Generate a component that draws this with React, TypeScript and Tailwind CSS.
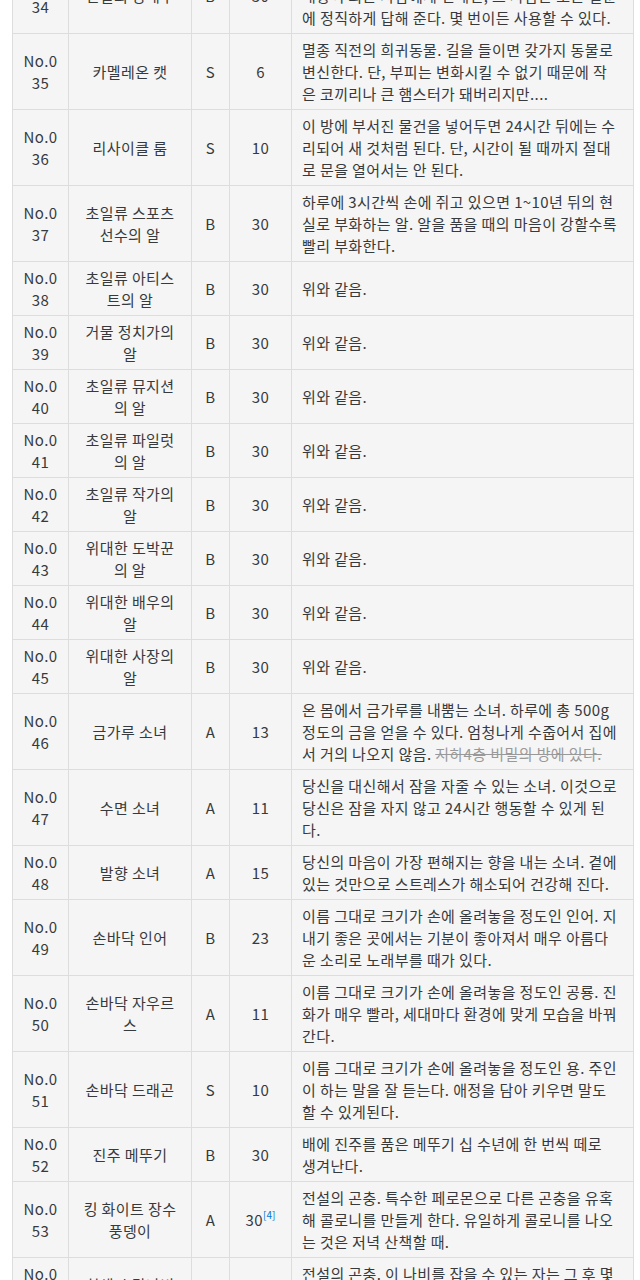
import React from "react";

interface Item {
  no: string;
  name: string;
  grade: string;
  price: string;
  note?: string;
  desc: string[];
  struck?: string;
}

// Lines are split with "|" to follow the wiki table's own wrapping.
const SAME = ["위와 같음."];

const ITEMS: Item[] = [
  {
    no: "034",
    name: "진실의 양배추",
    grade: "B",
    price: "30",
    desc: [
      "이 양배추를 먹게 하고 싶은 사람을 정한 뒤,",
      "대상이 되는 사람에게 건네면, 그 사람은 모든 질문",
      "에 정직하게 답해 준다. 몇 번이든 사용할 수 있다.",
    ],
  },
  {
    no: "035",
    name: "카멜레온 캣",
    grade: "S",
    price: "6",
    desc: [
      "멸종 직전의 희귀동물. 길을 들이면 갖가지 동물로",
      "변신한다. 단, 부피는 변화시킬 수 없기 때문에 작",
      "은 코끼리나 큰 햄스터가 돼버리지만....",
    ],
  },
  {
    no: "036",
    name: "리사이클 룸",
    grade: "S",
    price: "10",
    desc: [
      "이 방에 부서진 물건을 넣어두면 24시간 뒤에는 수",
      "리되어 새 것처럼 된다. 단, 시간이 될 때까지 절대",
      "로 문을 열어서는 안 된다.",
    ],
  },
  {
    no: "037",
    name: "초일류 스포츠|선수의 알",
    grade: "B",
    price: "30",
    desc: [
      "하루에 3시간씩 손에 쥐고 있으면 1~10년 뒤의 현",
      "실로 부화하는 알. 알을 품을 때의 마음이 강할수록",
      "빨리 부화한다.",
    ],
  },
  { no: "038", name: "초일류 아티스|트의 알", grade: "B", price: "30", desc: SAME },
  { no: "039", name: "거물 정치가의|알", grade: "B", price: "30", desc: SAME },
  { no: "040", name: "초일류 뮤지션|의 알", grade: "B", price: "30", desc: SAME },
  { no: "041", name: "초일류 파일럿|의 알", grade: "B", price: "30", desc: SAME },
  { no: "042", name: "초일류 작가의|알", grade: "B", price: "30", desc: SAME },
  { no: "043", name: "위대한 도박꾼|의 알", grade: "B", price: "30", desc: SAME },
  { no: "044", name: "위대한 배우의|알", grade: "B", price: "30", desc: SAME },
  { no: "045", name: "위대한 사장의|알", grade: "B", price: "30", desc: SAME },
  {
    no: "046",
    name: "금가루 소녀",
    grade: "A",
    price: "13",
    desc: [
      "온 몸에서 금가루를 내뿜는 소녀. 하루에 총 500g",
      "정도의 금을 얻을 수 있다. 엄청나게 수줍어서 집에",
      "서 거의 나오지 않음. ",
    ],
    struck: "지하4층 비밀의 방에 있다.",
  },
  {
    no: "047",
    name: "수면 소녀",
    grade: "A",
    price: "11",
    desc: [
      "당신을 대신해서 잠을 자줄 수 있는 소녀. 이것으로",
      "당신은 잠을 자지 않고 24시간 행동할 수 있게 된",
      "다.",
    ],
  },
  {
    no: "048",
    name: "발향 소녀",
    grade: "A",
    price: "15",
    desc: [
      "당신의 마음이 가장 편해지는 향을 내는 소녀. 곁에",
      "있는 것만으로 스트레스가 해소되어 건강해 진다.",
    ],
  },
  {
    no: "049",
    name: "손바닥 인어",
    grade: "B",
    price: "23",
    desc: [
      "이름 그대로 크기가 손에 올려놓을 정도인 인어. 지",
      "내기 좋은 곳에서는 기분이 좋아져서 매우 아름다",
      "운 소리로 노래부를 때가 있다.",
    ],
  },
  {
    no: "050",
    name: "손바닥 자우르|스",
    grade: "A",
    price: "11",
    desc: [
      "이름 그대로 크기가 손에 올려놓을 정도인 공룡. 진",
      "화가 매우 빨라, 세대마다 환경에 맞게 모습을 바꿔",
      "간다.",
    ],
  },
  {
    no: "051",
    name: "손바닥 드래곤",
    grade: "S",
    price: "10",
    desc: [
      "이름 그대로 크기가 손에 올려놓을 정도인 용. 주인",
      "이 하는 말을 잘 듣는다. 애정을 담아 키우면 말도",
      "할 수 있게된다.",
    ],
  },
  {
    no: "052",
    name: "진주 메뚜기",
    grade: "B",
    price: "30",
    desc: ["배에 진주를 품은 메뚜기 십 수년에 한 번씩 떼로", "생겨난다."],
  },
  {
    no: "053",
    name: "킹 화이트 장수|풍뎅이",
    grade: "A",
    price: "30",
    note: "[4]",
    desc: [
      "전설의 곤충. 특수한 페로몬으로 다른 곤충을 유혹",
      "해 콜로니를 만들게 한다. 유일하게 콜로니를 나오",
      "는 것은 저녁 산책할 때.",
    ],
  },
  {
    no: "054",
    name: "칠색 호랑나비",
    grade: "A",
    price: "25",
    desc: [
      "전설의 곤충. 이 나비를 잡을 수 있는 자는 그 후 몇",
      "년간 행운이 따른다고 한다.",
    ],
  },
];

function Lines({ lines }: { lines: string[] }) {
  return (
    <>
      {lines.map((line, i) => (
        <React.Fragment key={i}>
          {i > 0 && <br />}
          {line}
        </React.Fragment>
      ))}
    </>
  );
}

const cell =
  "border border-[#dddddd] bg-[#f5f5f5] pt-[5px] pb-[4px] px-[10px] align-middle whitespace-pre";

export default function App() {
  return (
    <div
      className="h-[1280px] overflow-hidden bg-white pl-3 text-[15px] leading-[22px] tracking-[0.4px] text-[#373a3c]"
      style={{ fontFamily: '"Noto Sans CJK KR", "Noto Sans", sans-serif' }}
    >
      <table className="-mt-[43px] w-[621px] table-fixed border-collapse">
        <colgroup>
          <col className="w-[56px]" />
          <col className="w-[123px]" />
          <col className="w-[38px]" />
          <col className="w-[62px]" />
          <col className="w-[342px]" />
        </colgroup>
        <tbody>
          {ITEMS.map((item) => (
            <tr key={item.no}>
              <td className={`${cell} text-center`}>
                No.{item.no.slice(0, 1)}
                <br />
                {item.no.slice(1)}
              </td>
              <td className={`${cell} text-center`}>
                <Lines lines={item.name.split("|")} />
              </td>
              <td className={`${cell} text-center`}>{item.grade}</td>
              <td className={`${cell} text-center`}>
                {item.price}
                {item.note && (
                  <span className="relative -top-[7px] text-[10px] leading-[0] tracking-normal text-[#0275d8]">
                    {item.note}
                  </span>
                )}
              </td>
              <td className={`${cell} text-left`}>
                <Lines lines={item.desc} />
                {item.struck && (
                  <del className="text-[#999999]">{item.struck}</del>
                )}
              </td>
            </tr>
          ))}
        </tbody>
      </table>
    </div>
  );
}
